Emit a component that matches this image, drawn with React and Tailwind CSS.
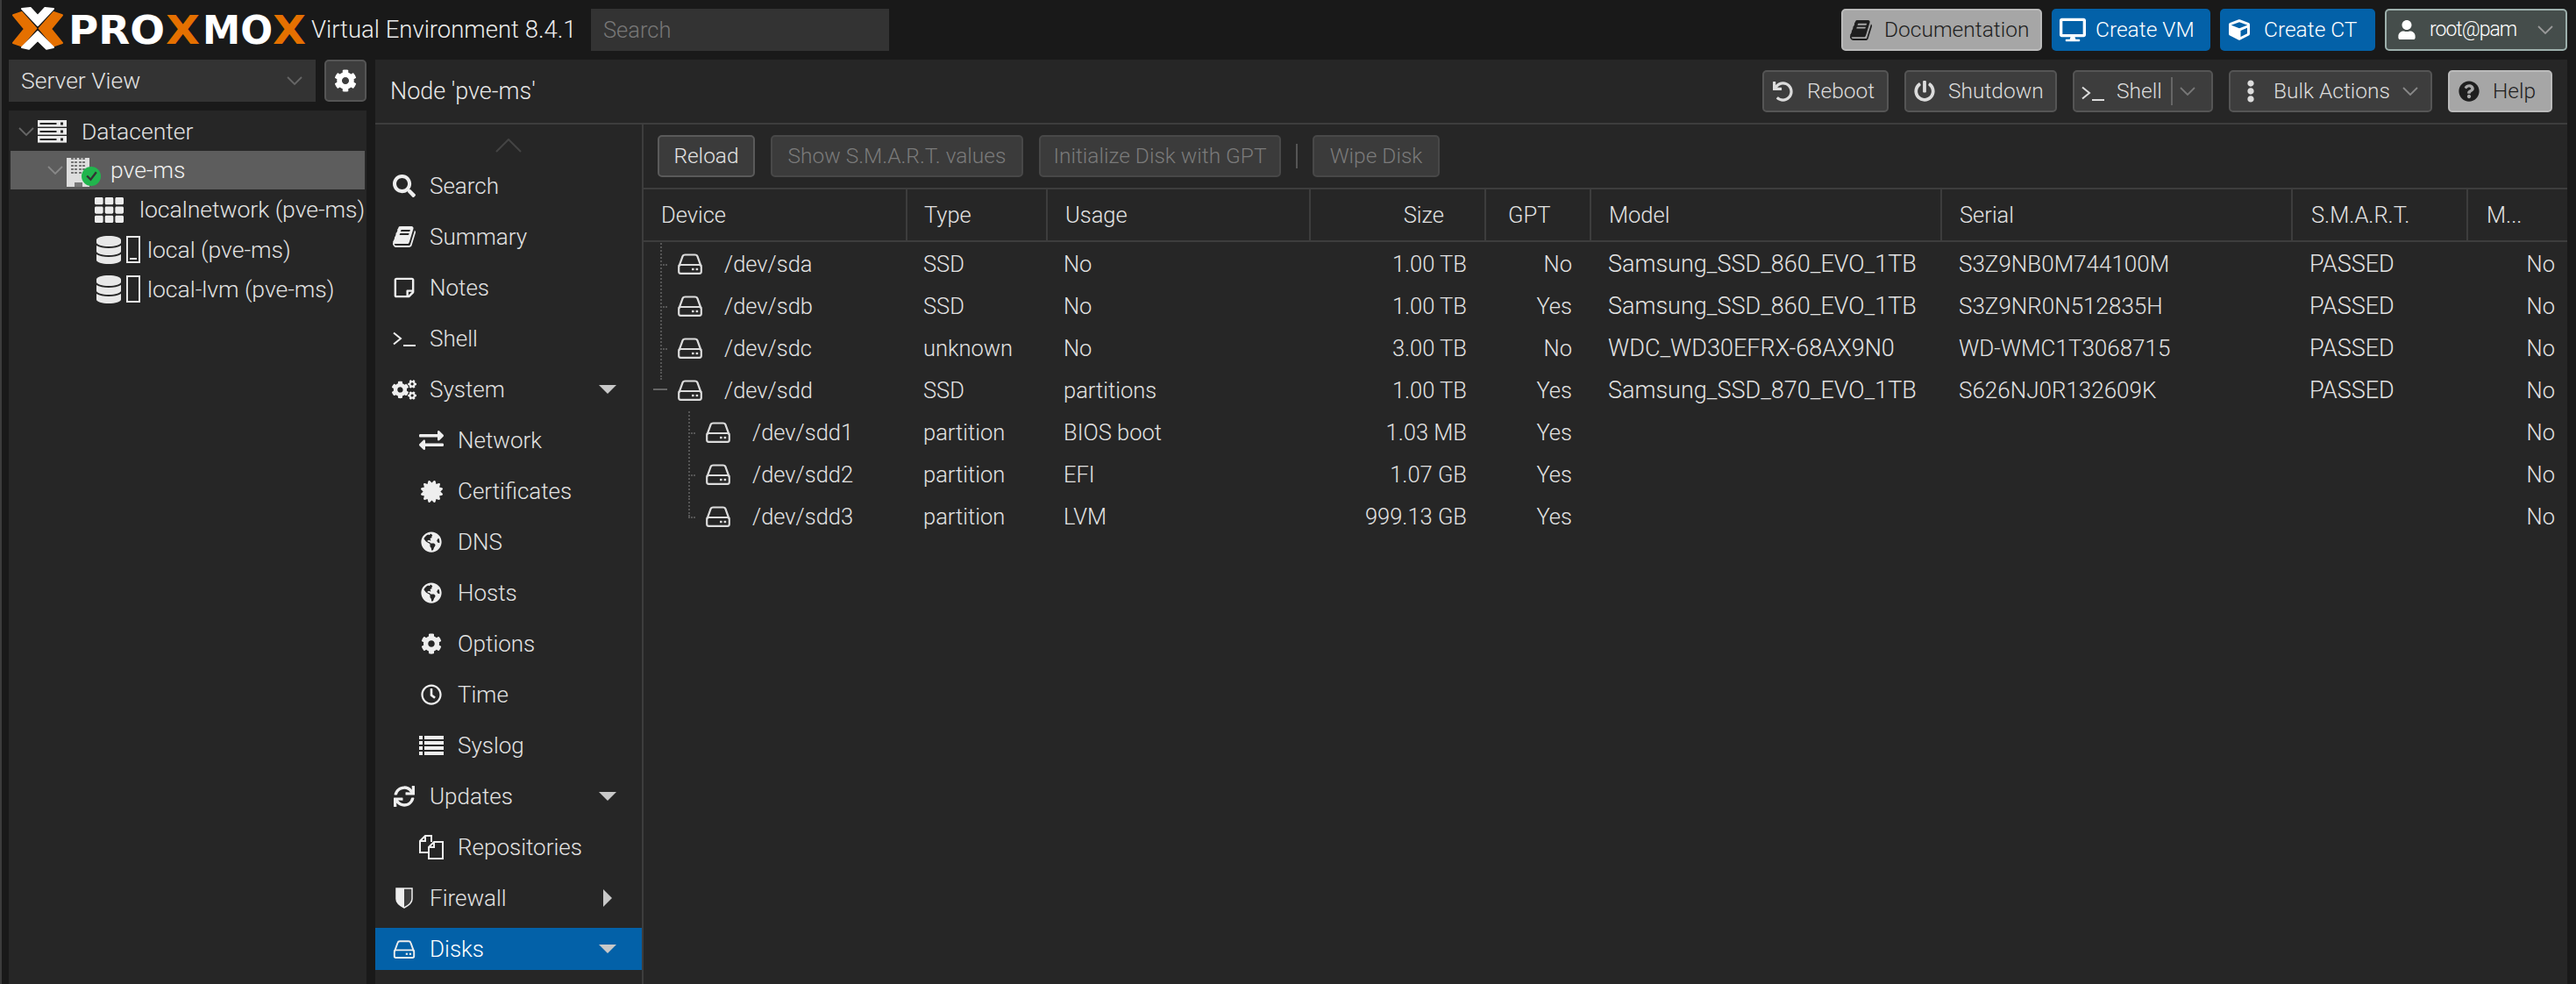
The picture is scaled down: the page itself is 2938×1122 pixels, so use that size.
import React from "react";
import {
  FaCertificate, FaCog, FaCogs, FaCube, FaDatabase, FaDesktop, FaEllipsisV,
  FaExchangeAlt, FaGlobeAmericas, FaPowerOff, FaQuestionCircle, FaRegClock,
  FaRegStickyNote, FaSearch, FaSync, FaTh, FaUndo, FaUser,
} from "react-icons/fa";

const font = { fontFamily: '"Roboto", "Liberation Sans", sans-serif' };

const Terminal = ({ className }) => (
  <svg viewBox="0 0 26 17" className={className} fill="none" stroke="currentColor" strokeWidth="2">
    <path d="M1 1.5l8 6.5-8 6.5" />
    <path d="M12 16h14" />
  </svg>
);

const Chevron = ({ className = "text-[#777]" }) => (
  <svg viewBox="0 0 18 10" className={`w-[18px] h-[10px] shrink-0 ${className}`} fill="none" stroke="currentColor" strokeWidth="1.8">
    <path d="M1 1l8 8 8-8" />
  </svg>
);

const BookIcon = ({ className }) => (
  <svg viewBox="0 0 1664 1792" className={className} fill="currentColor">
    <path d="M1639 478q40 57 18 129l-275 906q-19 64-76.5 107.5t-122.5 43.5h-923q-77 0-148.5-53.5t-99.5-131.5q-24-67-2-127 0-4 3-27t4-37q1-8-3-21.5t-3-19.5q2-11 8-21t16.5-23.5 16.5-23.5q23-38 45-91.5t30-91.5q3-10 .5-30t-.5-28q3-11 17-28t17-23q21-36 42-92t25-90q1-9-2.5-32t.5-28q4-13 22-30.5t22-22.5q19-26 42.5-84.5t27.5-96.5q1-8-3-25.5t-2-26.5q2-8 9-18t18-23 17-21q8-12 16.5-30.5t15-35 16-36 19.5-32 26.5-23.5 36-11.5 47.5 5.5l-1 3q38-9 51-9h761q74 0 114 56t18 130l-274 906q-36 119-71.5 153.5t-128.5 34.5h-869q-27 0-38 15-11 16-1 43 24 70 144 70h923q29 0 56-15.5t35-41.5l300-987q7-22 5-57 38 15 59 43zm-1064 2q-4 13 2 22.5t20 9.5h608q13 0 25.5-9.5t16.5-22.5l21-64q4-13-2-22.5t-20-9.5h-608q-13 0-25.5 9.5t-16.5 22.5zm-83 256q-4 13 2 22.5t20 9.5h608q13 0 25.5-9.5t16.5-22.5l21-64q4-13-2-22.5t-20-9.5h-608q-13 0-25.5 9.5t-16.5 22.5z" />
  </svg>
);

const HddIcon = ({ className }) => (
  <svg viewBox="0 0 28 24" className={className} fill="none" stroke="currentColor" strokeWidth="2.2">
    <path d="M1.5 14.5 L5.5 3.5 Q6 1.5 8.5 1.5 H19.5 Q22 1.5 22.5 3.5 L26.5 14.5" />
    <rect x="1.2" y="13" width="25.6" height="9.8" rx="2" />
    <rect x="16" y="16.8" width="2.6" height="2.4" fill="currentColor" stroke="none" />
    <rect x="20.6" y="16.8" width="2.6" height="2.4" fill="currentColor" stroke="none" />
  </svg>
);

const ListIcon = ({ className }) => (
  <svg viewBox="0 0 28 22" className={className} fill="currentColor">
    {[0, 6, 12, 18].map((y) => (
      <g key={y}>
        <rect x="0" y={y} width="4" height="4" />
        <rect x="6" y={y} width="22" height="4" />
      </g>
    ))}
  </svg>
);

const FilesIcon = ({ className }) => (
  <svg viewBox="0 0 28 28" className={className} fill="none" stroke="currentColor" strokeWidth="2">
    <path d="M11 20H1V7l6-6h7v7" />
    <path d="M7 1v6H1" />
    <path d="M11 27V14l6-6h10v19z" />
    <path d="M17 8v6h-6" />
  </svg>
);

const ShieldIcon = ({ className }) => (
  <svg viewBox="0 0 20 24" className={className}>
    <path d="M1 1h18v12c0 5-5 8-9 10-4-2-9-5-9-10z" fill="none" stroke="currentColor" strokeWidth="1.5" />
    <path d="M1 1h9v22c-4-2-9-5-9-10z" fill="currentColor" />
    <path d="M10 1h9v12c0 5-5 8-9 10z" fill="currentColor" opacity="0.12" />
  </svg>
);

const ServerIcon = () => (
  <svg viewBox="0 0 33 26" className="w-[33px] h-[26px] shrink-0">
    {[0, 9, 18].map((y) => (
      <g key={y}>
        <rect x="0" y={y} width="33" height="7.6" fill="#ececec" />
        <rect x="2.5" y={y + 3} width="19" height="2" fill="#262626" />
        <rect x="26" y={y + 2.5} width="3" height="3" fill="#262626" />
      </g>
    ))}
  </svg>
);

const NodeIcon = () => (
  <div className="relative w-[26px] h-[33px] bg-[#dedede] shrink-0">
    <div className="w-[16px] ml-[5px] mt-[4px] grid grid-cols-4 gap-[1.5px]">
      {Array.from({ length: 20 }).map((_, i) => (
        <div key={i} className="h-[2.5px] bg-[#777]" />
      ))}
    </div>
    <div className="absolute left-[9px] bottom-0 w-[9px] h-[5px] bg-[#777]" />
    <div className="absolute left-[17px] top-[10px] w-[22px] h-[22px] rounded-full bg-[#21b54d] flex items-center justify-center">
      <svg viewBox="0 0 14 14" className="w-[15px] h-[15px]" fill="none" stroke="#333" strokeWidth="2.2">
        <path d="M2 7l4 4 6-8" />
      </svg>
    </div>
  </div>
);

const Logo = () => (
  <svg viewBox="0 0 340 54" className="w-[340px] h-[54px] shrink-0">
    <g strokeLinejoin="round" strokeWidth="2">
      <path d="M3 10.3 L12.7 7 L29.3 25.3 L12.7 45.3 L3 42 L16 26 Z" fill="#e57000" stroke="#e57000" />
      <path d="M59 10.3 L49.3 7 L32.7 25.3 L49.3 45.3 L59 42 L46 26 Z" fill="#e57000" stroke="#e57000" />
      <path d="M13 3 L22.7 2 L31 11 L39.3 2 L49 3 L31 22 Z" fill="#fff" stroke="#fff" />
      <path d="M13 47 L21 48.7 L31 39 L41 48.7 L49 47 L31 29 Z" fill="#fff" stroke="#fff" />
    </g>
    <g fontFamily="DejaVu Sans, sans-serif" fontWeight="700" fontSize="45">
      <text x="66" y="43" fill="#fff" textLength="110" lengthAdjust="spacingAndGlyphs">PRO</text>
      <text x="177" y="43" fill="#e57000" textLength="39" lengthAdjust="spacingAndGlyphs">X</text>
      <text x="219" y="43" fill="#fff" textLength="80" lengthAdjust="spacingAndGlyphs">MO</text>
      <text x="299" y="43" fill="#e57000" textLength="38" lengthAdjust="spacingAndGlyphs">X</text>
    </g>
  </svg>
);

const Btn = ({ icon, children, className = "", caret }) => (
  <div className={`h-12 flex items-center rounded-[5px] border-2 border-[#555] bg-[#3d3d3d] text-[24.5px] text-[#dcdcdc] ${className}`}>
    {icon}
    <span>{children}</span>
    {caret}
  </div>
);

const ToolBtn = ({ children, disabled, className = "" }) => (
  <div className={`h-12 flex items-center justify-center rounded-[5px] border-2 bg-[#3b3b3b] text-[24.5px] ${disabled ? "text-[#7a7a7a] border-[#484848]" : "text-[#e2e2e2] border-[#5a5a5a]"} ${className}`}>
    {children}
  </div>
);

const navItems = [
  { name: "Search", icon: <FaSearch className="text-[26px]" />, level: 0 },
  { name: "Summary", icon: <BookIcon className="w-[26px] h-[28px]" />, level: 0 },
  { name: "Notes", icon: <FaRegStickyNote className="text-[26px]" />, level: 0 },
  { name: "Shell", icon: <Terminal className="w-[26px] h-[17px]" />, level: 0 },
  { name: "System", icon: <FaCogs className="text-[29px]" />, level: 0, arrow: "down" },
  { name: "Network", icon: <FaExchangeAlt className="text-[28px]" />, level: 1 },
  { name: "Certificates", icon: <FaCertificate className="text-[25px]" />, level: 1 },
  { name: "DNS", icon: <FaGlobeAmericas className="text-[24px]" />, level: 1 },
  { name: "Hosts", icon: <FaGlobeAmericas className="text-[24px]" />, level: 1 },
  { name: "Options", icon: <FaCog className="text-[24px]" />, level: 1 },
  { name: "Time", icon: <FaRegClock className="text-[24px]" />, level: 1 },
  { name: "Syslog", icon: <ListIcon className="w-[28px] h-[22px]" />, level: 1 },
  { name: "Updates", icon: <FaSync className="text-[24px]" />, level: 0, arrow: "down" },
  { name: "Repositories", icon: <FilesIcon className="w-[28px] h-[28px]" />, level: 1 },
  { name: "Firewall", icon: <ShieldIcon className="w-[20px] h-[24px]" />, level: 0, arrow: "right" },
  { name: "Disks", icon: <HddIcon className="w-[26px] h-[21px]" />, level: 0, arrow: "down", active: true },
];

const columns = [
  { name: "Device", w: "w-[301px]", cls: "pl-[20px]" },
  { name: "Type", w: "w-[160px]", cls: "pl-[19px]" },
  { name: "Usage", w: "w-[300px]", cls: "pl-[20px]" },
  { name: "Size", w: "w-[200px]", cls: "justify-end pr-[46px]", cell: "justify-end pr-[20px]" },
  { name: "GPT", w: "w-[120px]", cls: "pl-[25px]", cell: "justify-end pr-[20px]" },
  { name: "Model", w: "w-[400px]", cls: "pl-[20px]", cell: "pl-[21px] text-[27px]" },
  { name: "Serial", w: "w-[400px]", cls: "pl-[20px]", cell: "pl-[21px] text-[26px]" },
  { name: "S.M.A.R.T.", w: "w-[200px]", cls: "pl-[21px]", cell: "pl-[21px] text-[27px]" },
  { name: "M...", w: "w-[115px]", cls: "pl-[21px]", cell: "justify-end pr-[14px]" },
];

const disks = [
  ["/dev/sda", "SSD", "No", "1.00 TB", "No", "Samsung_SSD_860_EVO_1TB", "S3Z9NB0M744100M", "PASSED", "No"],
  ["/dev/sdb", "SSD", "No", "1.00 TB", "Yes", "Samsung_SSD_860_EVO_1TB", "S3Z9NR0N512835H", "PASSED", "No"],
  ["/dev/sdc", "unknown", "No", "3.00 TB", "No", "WDC_WD30EFRX-68AX9N0", "WD-WMC1T3068715", "PASSED", "No"],
  ["/dev/sdd", "SSD", "partitions", "1.00 TB", "Yes", "Samsung_SSD_870_EVO_1TB", "S626NJ0R132609K", "PASSED", "No"],
  ["/dev/sdd1", "partition", "BIOS boot", "1.03 MB", "Yes", "", "", "", "No"],
  ["/dev/sdd2", "partition", "EFI", "1.07 GB", "Yes", "", "", "", "No"],
  ["/dev/sdd3", "partition", "LVM", "999.13 GB", "Yes", "", "", "", "No"],
];

const DeviceCell = ({ name, index }) => {
  const child = index > 3;
  const last = index === 6;
  const open = index === 3;
  return (
    <div className={`flex items-center h-12 ${child ? "pl-[51px]" : "pl-[19px]"}`}>
      <div className="relative w-[20px] h-12 shrink-0">
        {!open && (
          <>
            <div className={`absolute left-0 top-0 ${last ? "h-6" : "h-[46px]"} border-l-2 border-dotted border-[#555]`} />
            <div className="absolute left-0 top-6 w-2 border-t-2 border-dotted border-[#555]" />
          </>
        )}
        {open && (
          <>
            <div className="absolute left-0 top-0 h-3 border-l-2 border-dotted border-[#555]" />
            <div className="absolute -left-2 top-[22px] w-4 h-[2px] bg-[#666]" />
          </>
        )}
      </div>
      <HddIcon className="w-[28px] h-[24px] text-[#dcdcdc] shrink-0" />
      <span className="ml-[25px]">{name}</span>
    </div>
  );
};

export default function App() {
  return (
    <div className="w-[2938px] h-[1122px] overflow-hidden border-l-2 border-[#3c3c3c] bg-[#191919] text-[25.5px] font-light text-[#e2e2e2] flex flex-col" style={font}>
      <div className="h-[68px] flex items-center pl-[10px] pr-[10px] shrink-0">
        <Logo />
        <span className="ml-[3px] w-[319px] text-[27.5px] text-[#ececec] whitespace-nowrap">Virtual Environment 8.4.1</span>
        <div className="w-[340px] h-12 bg-[#333] text-[#777] flex items-center pl-[14px]">Search</div>
        <div className="flex-1" />
        <div className="flex gap-[11px] text-[24.5px]">
          <div className="w-[229px] h-12 rounded-[5px] border-2 border-[#bbb] bg-[#a6a6a6] text-[#1e1e1e] flex items-center pl-[8px]">
            <BookIcon className="w-[25px] h-[27px] mr-[14px]" />
            <span>Documentation</span>
          </div>
          <div className="w-[181px] h-12 rounded-[5px] bg-[#0361a8] text-white flex items-center pl-[9px]">
            <FaDesktop className="text-[30px] mr-[11px]" />
            <span>Create VM</span>
          </div>
          <div className="w-[177px] h-12 rounded-[5px] bg-[#0361a8] text-white flex items-center pl-[10px]">
            <FaCube className="text-[24px] mr-[16px]" />
            <span>Create CT</span>
          </div>
          <div className="w-[208px] h-12 rounded-[5px] border-2 border-[#9db0ac] bg-[#454d4b] text-white flex items-center pl-[12px]">
            <FaUser className="text-[22px] mr-[15px]" />
            <span className="text-[23px] tracking-[-1px]">root@pam</span>
            <div className="flex-1" />
            <Chevron className="mr-[14px] text-[#999]" />
          </div>
        </div>
      </div>

      <div className="flex-1 flex pl-[8px] pr-[10px] gap-[10px] min-h-0">
        <div className="w-[408px] flex flex-col gap-[10px] shrink-0 text-[26.5px]">
          <div className="flex gap-[10px] h-12 shrink-0">
            <div className="flex-1 bg-[#333] flex items-center justify-between pl-[14px] pr-[15px]">
              <span>Server View</span>
              <Chevron className="text-[#666]" />
            </div>
            <div className="w-12 rounded-[5px] border-2 border-[#555] bg-[#3d3d3d] flex items-center justify-center text-white">
              <FaCog className="text-[26px]" />
            </div>
          </div>
          <div className="flex-1 bg-[#262626] pt-[2px] px-[2px]">
            <div className="h-[44px] flex items-center pl-[9px]">
              <Chevron className="text-[#666]" />
              <div className="ml-[4px]"><ServerIcon /></div>
              <span className="ml-[17px]">Datacenter</span>
            </div>
            <div className="h-[44px] flex items-center pl-[42px] bg-[#5d5d5d]">
              <Chevron className="text-[#888]" />
              <div className="ml-[4px]"><NodeIcon /></div>
              <span className="ml-[24px] text-[#f0f0f0]">pve-ms</span>
            </div>
            <div className="h-[46px] flex items-center pl-[96px]">
              <FaTh className="text-[33px] text-[#ececec] shrink-0" />
              <span className="ml-[18px] whitespace-nowrap">localnetwork (pve-ms)</span>
            </div>
            {["local (pve-ms)", "local-lvm (pve-ms)"].map((name, i) => (
              <div key={name} className="h-[45px] flex items-center pl-[96px]">
                <FaDatabase className="text-[32px] text-[#e8e8e8] shrink-0" />
                <div className="relative ml-[4px] w-4 h-[31px] border-2 border-[#e8e8e8] shrink-0">
                  {i === 0 && <div className="absolute left-[2px] right-[2px] bottom-[2px] h-[2px] bg-[#e8e8e8]" />}
                </div>
                <span className="ml-2 whitespace-nowrap">{name}</span>
              </div>
            ))}
          </div>
        </div>

        <div className="flex-1 bg-[#262626] flex flex-col min-w-0">
          <div className="h-[74px] border-b-2 border-[#3d3d3d] flex items-center pl-[17px] pr-[17px] shrink-0">
            <span className="text-[27px] text-[#e8e8e8]">Node 'pve-ms'</span>
            <div className="flex-1" />
            <div className="flex gap-[18px]">
              <Btn className="w-[144px] pl-[10px]" icon={<FaUndo className="text-[23px] mr-[16px]" />}>Reboot</Btn>
              <Btn className="w-[174px] pl-[9px]" icon={<FaPowerOff className="text-[24px] mr-[15px]" />}>Shutdown</Btn>
              <Btn
                className="w-[160px] pl-[8px]"
                icon={<Terminal className="w-[26px] h-[17px] mr-[14px] mt-1" />}
                caret={
                  <div className="ml-[10px] border-l-2 border-[#666] h-8 pl-2 flex items-center">
                    <Chevron />
                  </div>
                }
              >
                Shell
              </Btn>
              <Btn className="w-[232px] pl-[10px]" icon={<FaEllipsisV className="text-[26px] mr-[13px]" />} caret={<Chevron className="ml-[14px] text-[#888]" />}>
                Bulk Actions
              </Btn>
              <div className="w-[119px] h-12 rounded-[5px] border-2 border-[#bbb] bg-[#a6a6a6] text-[24.5px] text-[#1e1e1e] flex items-center pl-[10px]">
                <FaQuestionCircle className="text-[24px] mr-[15px]" />
                <span>Help</span>
              </div>
            </div>
          </div>

          <div className="flex-1 flex min-h-0">
            <div className="w-[304px] border-r-2 border-[#3d3d3d] shrink-0 box-content flex flex-col text-[26px]">
              <div className="h-[42px] flex items-start justify-center pt-[16px]">
                <svg viewBox="0 0 30 16" className="w-[30px] h-4 text-[#444]" fill="none" stroke="currentColor" strokeWidth="2">
                  <path d="M1 15L15 1l14 14" />
                </svg>
              </div>
              <div className="mt-[-1px]">
                {navItems.map((item) => (
                  <div key={item.name} className="h-[58px] flex items-center">
                    <div className={`h-12 flex-1 flex items-center ${item.level ? "pl-[50px]" : "pl-[19px]"} ${item.active ? "bg-[#0361a8] text-white" : ""}`}>
                      <div className="w-[28px] h-7 flex items-center justify-center text-[#eee] shrink-0">{item.icon}</div>
                      <span className={item.level ? "ml-[16px]" : "ml-[15px]"}>{item.name}</span>
                      <div className="flex-1" />
                      {item.arrow === "down" && <div className="mr-[29px] w-0 h-0 border-x-[10px] border-x-transparent border-t-[10px] border-t-[#c8c8c8]" />}
                      {item.arrow === "right" && <div className="mr-[34px] w-0 h-0 border-y-[10px] border-y-transparent border-l-[10px] border-l-[#c8c8c8]" />}
                    </div>
                  </div>
                ))}
              </div>
            </div>

            <div className="flex-1 flex flex-col min-w-0">
              <div className="h-[74px] border-b-2 border-[#3d3d3d] flex items-center pl-[16px] gap-[18px] shrink-0">
                <ToolBtn className="w-[111px]">Reload</ToolBtn>
                <ToolBtn disabled className="w-[288px]">Show S.M.A.R.T. values</ToolBtn>
                <ToolBtn disabled className="w-[276px]">Initialize Disk with GPT</ToolBtn>
                <div className="w-[2px] h-7 bg-[#555] mx-[-1px]" />
                <ToolBtn disabled className="w-[145px]">Wipe Disk</ToolBtn>
              </div>
              <div className="h-[60px] border-b-[2px] border-[#3d3d3d] flex shrink-0">
                {columns.map((col) => (
                  <div key={col.name} className={`${col.w} flex items-center border-r-2 border-[#3d3d3d] last:border-r-0 shrink-0 ${col.cls}`}>
                    {col.name}
                  </div>
                ))}
              </div>
              <div className="pt-[1px]">
                {disks.map((row, i) => (
                  <div key={row[0]} className="flex h-12">
                    {row.map((val, c) =>
                      c === 0 ? (
                        <div key={c} className={columns[c].w}>
                          <DeviceCell name={val} index={i} />
                        </div>
                      ) : (
                        <div key={c} className={`${columns[c].w} flex items-center ${columns[c].cell || "pl-[20px]"} shrink-0 whitespace-nowrap`}>
                          {val}
                        </div>
                      ),
                    )}
                  </div>
                ))}
              </div>
            </div>
          </div>
        </div>
      </div>
    </div>
  );
}
